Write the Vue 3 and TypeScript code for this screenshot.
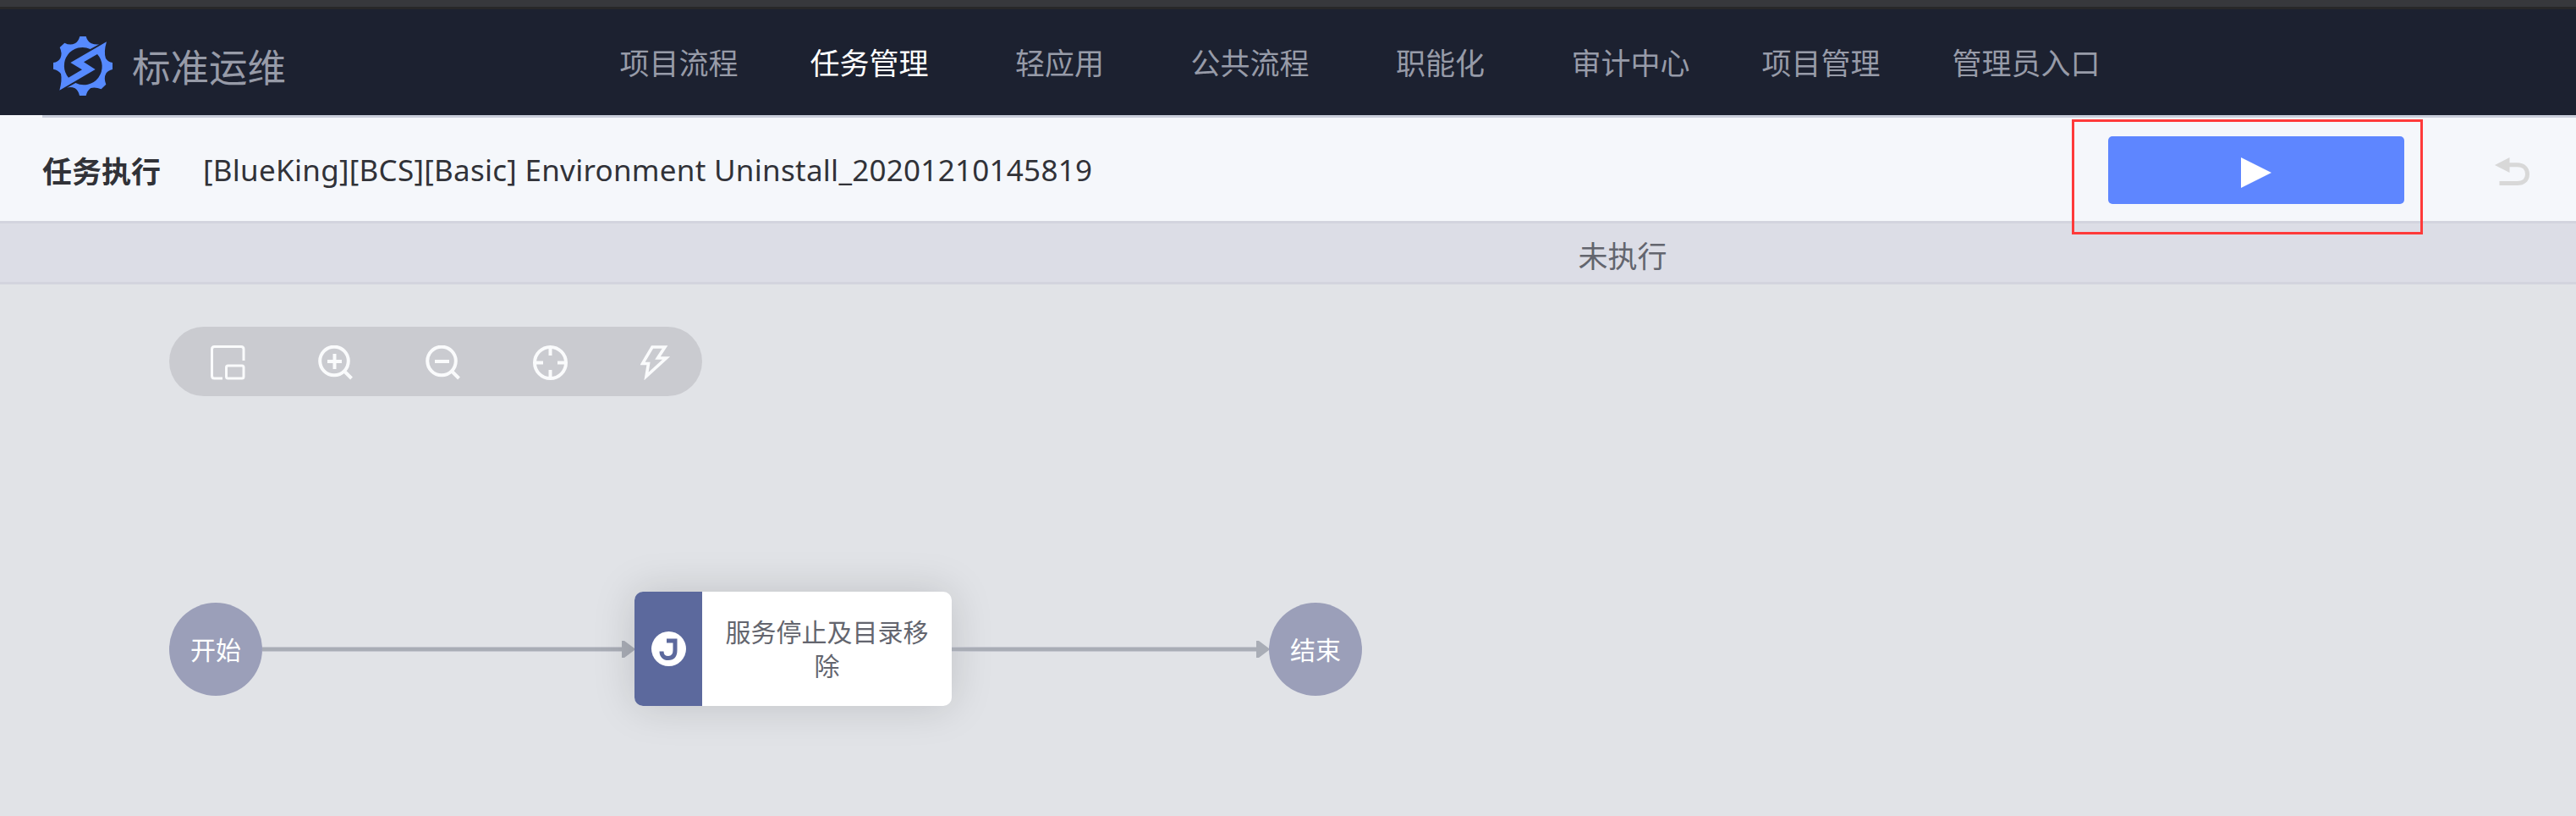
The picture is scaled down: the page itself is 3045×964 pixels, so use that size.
<script setup lang="ts">
interface NavItem {
  label: string
  active?: boolean
}

const navItems: NavItem[] = [
  { label: '项目流程' },
  { label: '任务管理', active: true },
  { label: '轻应用' },
  { label: '公共流程' },
  { label: '职能化' },
  { label: '审计中心' },
  { label: '项目管理' },
  { label: '管理员入口' },
]
</script>

<template>
  <div class="page">
    <div class="chrome"></div>
    <header class="header">
      <svg class="logo" viewBox="189 129 210 210">
        <path
          d="M378 148Q367 184 375 207Q384 220 399 222V246Q384 249 376 260Q367 276 376 299L359 316Q338 307 322 312Q309 321 305 339H282Q278 321 266 313Q251 306 237 311L268 294A65 65 0 0 0 345 192L297 220L338 246L211 320Q221 285 216 262Q207 248 189 245V222Q207 219 214 206Q222 189 212 168L229 152Q248 162 266 154Q278 147 283 129H305Q310 147 324 154Q338 159 352 157L320 174A65 65 0 0 0 243 275L291 247L250 222Z"
        />
      </svg>
      <span class="brand">标准运维</span>
      <nav class="nav">
        <a v-for="item in navItems" :key="item.label" class="nav-item" :class="{ active: item.active }">{{ item.label }}</a>
      </nav>
    </header>

    <section class="task-bar">
      <h1 class="task-heading">任务执行</h1>
      <span class="task-name">[BlueKing][BCS][Basic] Environment Uninstall_20201210145819</span>
      <div class="actions">
        <button class="run-button" type="button">
          <svg class="play" viewBox="0 0 36 36"><path d="M0 0L36 18L0 36Z" /></svg>
          <span class="highlight"></span>
        </button>
        <svg class="undo" viewBox="0 0 41 34">
          <path class="undo-head" d="M0 9L17.500 0V18Z" />
          <path class="undo-line" d="M17 8.800H26.500C34 8.800 38.500 13 38.500 19.700S34 30.500 26.500 30.500H5.500" />
        </svg>
      </div>
    </section>

    <section class="status"><span>未执行</span></section>

    <main class="canvas">
      <div class="toolbar">
        <svg class="tool" viewBox="0 0 41 41">
          <path d="M39 18V4.500Q39 1.500 36 1.500H4.500Q1.500 1.500 1.500 4.500V36Q1.500 39 4.500 39H14" />
          <rect x="18.500" y="24" width="20.500" height="15" rx="2" />
        </svg>
        <svg class="tool zoom" viewBox="0 0 41 41">
          <circle cx="19" cy="18.500" r="16.800" />
          <path d="M11 19H28M19.500 10V28M31 30.500L39.500 39" />
        </svg>
        <svg class="tool zoom" viewBox="0 0 41 41">
          <circle cx="19" cy="18.500" r="16.800" />
          <path d="M11 19H28M31 30.500L39.500 39" />
        </svg>
        <svg class="tool zoom" viewBox="0 0 41 41">
          <circle cx="20.500" cy="20.500" r="18.500" />
          <path d="M20.500 2V12M20.500 29V39M2 20.500H12M29 20.500H39" />
        </svg>
        <svg class="tool bolt" viewBox="0 0 41 41">
          <path d="M14 2H29L20.500 15H30.500L7 36.500L9.500 21.500H2.500Z" />
        </svg>
      </div>

      <div class="flow">
        <div class="terminal">开始</div>
        <svg class="link" viewBox="0 0 440 20">
          <path class="link-edge" d="M0 10H426" />
          <path class="link-core" d="M0 10H426" />
          <path class="link-head" d="M425 0H428L440 9V11L428 20H425Z" />
        </svg>
        <div class="node">
          <div class="node-type">
            <svg class="job" viewBox="0 0 41 41">
              <circle cx="20.500" cy="20.500" r="20.500" />
              <path d="M18 11H28V22C28 28.500 25 31.500 20 31.500C15 31.500 12 28.500 12 23.500" />
            </svg>
          </div>
          <div class="node-name">服务停止及目录移除</div>
        </div>
        <svg class="link short" viewBox="0 0 375 20">
          <path class="link-edge" d="M0 10H361" />
          <path class="link-core" d="M0 10H361" />
          <path class="link-head" d="M360 0H363L375 9V11L363 20H360Z" />
        </svg>
        <div class="terminal">结束</div>
      </div>
    </main>
  </div>
</template>

<style>
body {
  margin: 0;
}
</style>

<style scoped>
.page {
  display: flex;
  flex-direction: column;
  width: 3045px;
  height: 964px;
  overflow: hidden;
  background: #e1e3e7;
  font-family: "Noto Sans", "Noto Sans CJK SC", sans-serif;
  font-size: 35px;
}

.page * {
  box-sizing: border-box;
}

svg {
  display: block;
  flex: none;
}

.chrome {
  flex: none;
  height: 11px;
  background: #37383c;
  border-bottom: 3px solid #282829;
}

.header {
  display: flex;
  flex: none;
  height: 125px;
  align-items: center;
  padding-left: 63px;
  background: #1c2130;
  color: #979ba8;
  font-family: "Noto Sans CJK SC", sans-serif;
}

.logo {
  width: 70px;
  height: 70px;
  margin-top: 9px;
  fill: #568aff;
}

.brand {
  width: 534px;
  margin: 7px 0 0 23px;
  font-size: 45.5px;
  line-height: 60px;
}

.nav {
  display: flex;
  margin-top: -2px;
}

.nav-item {
  min-width: 225px;
  padding: 0 42.5px;
  line-height: 50px;
  text-align: center;
  white-space: nowrap;
}

.nav-item.active {
  color: #fff;
}

.task-bar {
  display: flex;
  flex: none;
  height: 128px;
  align-items: center;
  padding-left: 50px;
  border-bottom: 3px solid #d3d4de;
  background: linear-gradient(#cacedb, #cacedb) 50px 0 / 100% 3px no-repeat #f5f7fb;
  color: #313238;
}

.task-heading {
  width: 190px;
  margin: 4px 0 0;
  font-family: "Noto Sans CJK SC", sans-serif;
  font-size: 35px;
  font-weight: 700;
  line-height: 50px;
}

.task-name {
  margin-top: 4px;
  letter-spacing: 0.27px;
  line-height: 50px;
  white-space: nowrap;
}

.actions {
  display: flex;
  align-items: center;
  margin-left: auto;
  padding-right: 55px;
}

.run-button {
  position: relative;
  display: flex;
  width: 350px;
  height: 80px;
  align-items: center;
  justify-content: center;
  margin-top: 4px;
  padding: 7px 0 0;
  border: 0;
  border-radius: 5px;
  background: #5e86ff;
}

.play {
  width: 36px;
  height: 36px;
  fill: #fff;
}

.highlight {
  position: absolute;
  inset: -20px -22px -36px -43px;
  border: 3px solid #ff3a3a;
}

.undo {
  width: 41px;
  height: 34px;
  margin: 9px 0 0 107px;
}

.undo-head {
  fill: #d8d8d8;
}

.undo-line {
  fill: none;
  stroke: #d8d8d8;
  stroke-width: 5;
}

.status {
  display: flex;
  flex: none;
  height: 72px;
  align-items: center;
  justify-content: center;
  padding-left: 791px;
  padding-top: 3px;
  border-bottom: 3px solid #d3d4de;
  background: #dcdde6;
  color: #63656e;
  font-family: "Noto Sans CJK SC", sans-serif;
}

.canvas {
  flex: 1;
  padding: 50px 0 0 200px;
}

.toolbar {
  display: flex;
  width: 630px;
  height: 82px;
  align-items: center;
  gap: 86px;
  padding: 2px 0 0 49px;
  border-radius: 41px;
  background: #cacbd0;
}

.tool {
  width: 41px;
  height: 41px;
  fill: none;
  stroke: #fafbfc;
  stroke-width: 3;
}

.zoom {
  stroke-width: 4;
}

.bolt {
  stroke-width: 3.6;
}

.flow {
  display: flex;
  align-items: center;
  margin-top: 231px;
  font-family: "Noto Sans CJK SC", sans-serif;
  font-size: 30px;
}

.terminal {
  display: flex;
  width: 110px;
  height: 110px;
  align-items: center;
  justify-content: center;
  padding-bottom: 2px;
  border-radius: 50%;
  background: #9b9fb9;
  color: #fff;
}

.link {
  width: 440px;
  height: 20px;
}

.link.short {
  width: 375px;
}

.link-edge {
  stroke: #c5c7d0;
  stroke-width: 6;
}

.link-core {
  stroke: #a9adb6;
  stroke-width: 4;
}

.link-head {
  fill: #a9adb6;
}

.node {
  display: flex;
  width: 375px;
  height: 135px;
  overflow: hidden;
  border-radius: 10px;
  background: #fff;
  box-shadow: 0 0 50px rgba(0, 0, 0, 0.15);
}

.node-type {
  display: flex;
  width: 80px;
  align-items: center;
  justify-content: center;
  background: #5c699d;
}

.job {
  width: 41px;
  height: 41px;
  fill: #fff;
}

.job path {
  fill: none;
  stroke: #5c699d;
  stroke-width: 5;
}

.node-name {
  display: flex;
  width: 295px;
  align-items: center;
  padding: 0 27px 3px;
  color: #63656e;
  line-height: 40px;
  text-align: center;
}
</style>
